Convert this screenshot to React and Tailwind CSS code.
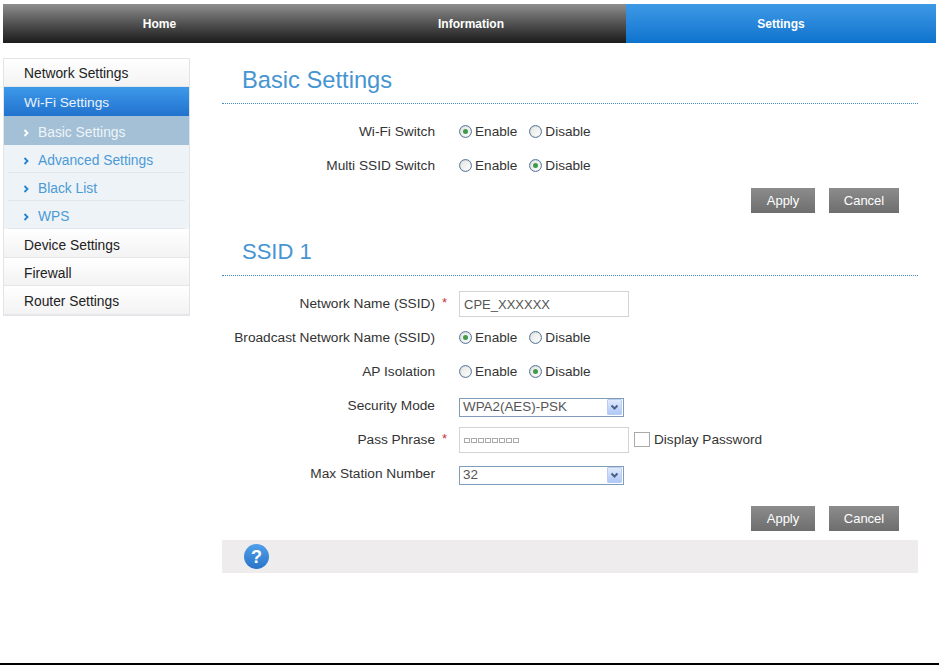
const Radio = ({ checked, label }) => (
  <span className="flex items-center">
    <span className="mt-[1px] w-[13px] h-[13px] rounded-full border border-[#5a7a9c] bg-gradient-to-br from-[#e4e4e0] to-white flex items-center justify-center shadow-[inset_0_0_1px_#8a9ab0]">
      {checked && <span className="w-[5px] h-[5px] rounded-full bg-[#3f9a4a]" />}
    </span>
    <span className="ml-[3px] pt-[2px] text-[13.6px] text-[#333]">{label}</span>
  </span>
);

const EnableDisable = ({ value }) => (
  <div className="flex items-center gap-[12px]">
    <Radio checked={value === 'enable'} label="Enable" />
    <Radio checked={value === 'disable'} label="Disable" />
  </div>
);

const Row = ({ label, required, children }) => (
  <div className="h-[34px] flex items-center">
    <div className="w-[213px] pt-[2px] text-right text-[13.7px] text-[#333] shrink-0">{label}</div>
    <div className="w-[24px] shrink-0 pl-[7px] text-[13px] text-[#c8353a] h-[20px] leading-[20px]">
      {required ? '*' : ''}
    </div>
    {children}
  </div>
);

const Select = ({ value }) => (
  <div className="mt-[4px] w-[165px] h-[19px] border border-[#7f9db9] flex items-center justify-between pl-[3px] pr-[1px] bg-white">
    <span className="text-[13.4px] text-[#555]">{value}</span>
    <span className="w-[15px] h-[16px] bg-gradient-to-b from-[#e1eafd] to-[#aec8f7] border border-[#b9cdf0] rounded-[1px] flex items-center justify-center">
      <svg width="9" height="7" viewBox="0 0 9 7">
        <path d="M1.5 1.5 L4.5 4.5 L7.5 1.5" fill="none" stroke="#4d6185" strokeWidth="2" />
      </svg>
    </span>
  </div>
);

const Buttons = () => (
  <div className="flex justify-end gap-[14px] pr-[19px]">
    <button className="w-[64px] h-[25px] bg-gradient-to-b from-[#8c8c8c] to-[#6e6e6e] text-white text-[13px]">
      Apply
    </button>
    <button className="w-[70px] h-[25px] bg-gradient-to-b from-[#8c8c8c] to-[#6e6e6e] text-white text-[13px]">
      Cancel
    </button>
  </div>
);

const SectionTitle = ({ children, size }) => (
  <div className="h-[38px] border-b border-dotted border-[#3f8fc8] pl-[20px]">
    <h1 className={`${size} leading-[28px] text-[#4695d2]`}>{children}</h1>
  </div>
);

const NavTab = ({ label, active, className }) => (
  <div
    className={`flex items-center justify-center text-[12px] font-bold text-white ${className} ${
      active
        ? 'bg-gradient-to-b from-[#3d99e6] to-[#0a73cd]'
        : 'bg-gradient-to-b from-[#8f8f8f] to-[#1c1c1c]'
    }`}
  >
    {label}
  </div>
);

const MenuItem = ({ label, height, top }) => (
  <div className={`${height} ${top} flex items-center pl-[20px] text-[13.8px] text-[#222] bg-gradient-to-b from-white to-[#f3f3f3] border-b border-[#e4e6ea]`}>
    {label}
  </div>
);

const SubItem = ({ label, active }) => (
  <div className={active ? 'h-[29px] bg-[#a3c0d6]' : 'h-[28px] bg-[#eef3f8] px-[4px]'}>
    <div
      className={`h-full pt-[6px] flex items-center text-[13.8px] ${active ? 'pl-[19px] text-[#eef4f8]' : 'pl-[15px] text-[#4c9ad6] border-b border-[#e0e6ec]'}`}
    >
      <svg width="6" height="8" viewBox="0 0 6 8" className="mr-[9px] -mt-[2px]">
        <path d="M1.5 1 L4.5 4 L1.5 7" fill="none" stroke={active ? '#ffffff' : '#1f83d0'} strokeWidth="1.8" />
      </svg>
      {label}
    </div>
  </div>
);

const App = () => {
  return (
    <div className="h-[665px] flex flex-col bg-white font-['Liberation_Sans',Arial,sans-serif] overflow-hidden">
      {/* Top nav */}
      <div className="mt-[4px] ml-[3px] mr-[3px] h-[39px] flex shrink-0">
        <NavTab label="Home" className="w-[313px]" />
        <NavTab label="Information" className="w-[310px]" />
        <NavTab label="Settings" active className="flex-1" />
      </div>

      <div className="flex flex-1 mt-[15px]">
        {/* Sidebar */}
        <div className="w-[187px] ml-[3px] self-start border border-[#e2e4e8] shrink-0">
          <MenuItem label="Network Settings" height="h-[28px]" top="pt-[4px]" />
          <div className="h-[29px] pt-[4px] flex items-center pl-[20px] text-[13.7px] text-[#eaf3fb] bg-gradient-to-b from-[#3d99ea] to-[#2272cd]">
            Wi-Fi Settings
          </div>
          <SubItem label="Basic Settings" active />
          <SubItem label="Advanced Settings" />
          <SubItem label="Black List" />
          <SubItem label="WPS" />
          <MenuItem label="Device Settings" height="h-[29px]" top="pt-[6px]" />
          <MenuItem label="Firewall" height="h-[28px]" top="pt-[6px]" />
          <MenuItem label="Router Settings" height="h-[29px]" top="pt-[4px]" />
        </div>

        {/* Main */}
        <div className="w-[696px] ml-[32px] pt-[8px] shrink-0">
          <SectionTitle size="text-[23.7px]">Basic Settings</SectionTitle>

          <div className="mt-[10px]">
            <Row label="Wi-Fi Switch">
              <EnableDisable value="enable" />
            </Row>
            <Row label="Multi SSID Switch">
              <EnableDisable value="disable" />
            </Row>
          </div>

          <div className="mt-[6px]">
            <Buttons />
          </div>

          <div className="mt-[25px]">
            <SectionTitle size="text-[22px]">SSID 1</SectionTitle>
          </div>

          <div className="mt-[10px]">
            <Row label="Network Name (SSID)" required>
              <div className="mt-[2px] w-[170px] h-[26px] border border-[#d4d4d4] flex items-center pl-[4px] pt-[2px] text-[13px] text-[#555]">
                CPE_XXXXXX
              </div>
            </Row>
            <Row label="Broadcast Network Name (SSID)">
              <EnableDisable value="enable" />
            </Row>
            <Row label="AP Isolation">
              <EnableDisable value="disable" />
            </Row>
            <Row label="Security Mode">
              <Select value="WPA2(AES)-PSK" />
            </Row>
            <Row label="Pass Phrase" required>
              <div className="mt-[2px] w-[170px] h-[26px] border border-[#d4d4d4] flex items-center pl-[4px] gap-[1px]">
                {[0, 1, 2, 3, 4, 5, 6, 7].map((i) => (
                  <span key={i} className="w-[6px] h-[5px] border border-[#aaa]" />
                ))}
              </div>
              <span className="ml-[5px] w-[16px] h-[15px] border border-[#aaa] bg-white" />
              <span className="ml-[4px] pt-[2px] text-[13.6px] text-[#333]">Display Password</span>
            </Row>
            <Row label="Max Station Number">
              <Select value="32" />
            </Row>
          </div>

          <div className="mt-[16px]">
            <Buttons />
          </div>

          {/* Help bar */}
          <div className="mt-[9px] h-[33px] bg-[#efecee] flex items-center pl-[22px]">
            <div className="w-[25px] h-[25px] rounded-full bg-gradient-to-b from-[#4fa0ea] to-[#2a74c8] flex items-center justify-center text-white font-bold text-[18px] leading-none">
              ?
            </div>
          </div>
        </div>
      </div>

      <div className="h-[2px] bg-black shrink-0" />
    </div>
  );
};

export default App;
